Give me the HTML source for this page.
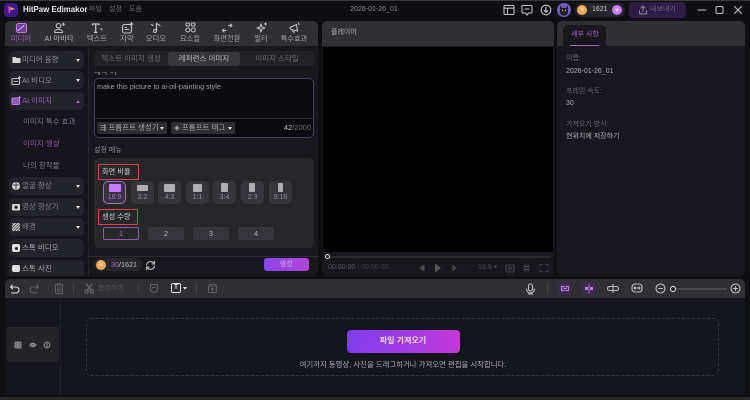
<!DOCTYPE html>
<html lang="ko"><head><meta charset="utf-8"><style>
html,body{margin:0;padding:0;background:#0e0e13}
#p{position:relative;width:750px;height:400px;overflow:hidden;background:#0e0e13;font-family:"Liberation Sans","Noto Sans CJK KR",sans-serif;color:#a0a0a5;font-size:7.5px;line-height:10px;filter:blur(.35px)}
#p div,#p span,#p svg{position:absolute}
.t{white-space:nowrap;transform:translateY(-50%)}
.c{white-space:nowrap;transform:translate(-50%,-50%)}
.r{border-radius:4px}
.sb{left:9px;width:75px;height:18px;background:#23232a;border-radius:5px}
.tri{width:0;height:0;border-left:2.5px solid transparent;border-right:2.5px solid transparent;border-top:3px solid #ddd}
.chip{top:181px;width:23px;height:23px;background:#35353b;border-radius:5px;box-sizing:border-box}
.chip i{position:absolute;background:#aeaeb3;border-radius:1px}
.chip b{position:absolute;left:0;right:0;top:12px;text-align:center;font-weight:400;font-size:7px;color:#8c8c92}
.q{top:227px;width:36px;height:13px;background:#35353b;border-radius:2px;text-align:center;line-height:13px;color:#aeaeb3}
svg{fill:none;stroke:#c0c0c4;stroke-width:1.1;stroke-linecap:round;stroke-linejoin:round}
</style></head><body><div id="p">
<div style="left:0;top:0;width:750px;height:1px;background:#3a3a3d"></div>

<!-- title bar -->
<div style="left:4px;top:3px;width:14px;height:14px;border-radius:4px;background:#3a1d8a"></div>
<svg style="left:7px;top:5px" width="9" height="10" viewBox="0 0 9 10"><path d="M1 1L8 4L4 5L2 9Z" fill="#e83fb0" stroke="none"/><path d="M3 2L8 4L4 5Z" fill="#f4b23c" stroke="none"/></svg>
<div class="t" style="left:23px;top:10px;color:#ececee;font-weight:700;font-size:7.9px">HitPaw Edimakor</div>
<div class="t" style="left:89px;top:10px;color:#6c6c72;font-size:7px">파일</div>
<div class="t" style="left:109px;top:10px;color:#6c6c72;font-size:7px">설정</div>
<div class="t" style="left:129px;top:10px;color:#6c6c72;font-size:7px">도움</div>
<div class="c" style="left:374px;top:10px;color:#8e8e94;font-size:7px">2026-01-26_01</div>

<svg style="left:503px;top:4px" width="12" height="12" viewBox="0 0 12 12"><rect x="1" y="1.5" width="10" height="9" rx="1"/><path d="M1 4.2H11M4.500 4.200V10.500"/></svg>
<svg style="left:521px;top:4px" width="12" height="13" viewBox="0 0 12 13"><path d="M2 1.500H10a1 1 0 0 1 1 1V8a1 1 0 0 1-1 1H7.500L6 11L4.500 9H2a1 1 0 0 1-1-1V2.500a1 1 0 0 1 1-1Z"/><path d="M4 5H8"/></svg>
<svg style="left:540px;top:4px" width="12" height="12" viewBox="0 0 12 12"><circle cx="6" cy="6" r="4.800"/><path d="M6 3V8M4.200 6.500L6 8.300L7.800 6.500"/></svg>
<div style="left:557px;top:3px;width:14px;height:14px;border-radius:50%;background:#6c5fc0"></div>
<svg style="left:559px;top:5px" width="10" height="11" viewBox="0 0 10 11"><path d="M1 0.500L3 3H7L9 .5L9 7C9 9.500 7 10.500 5 10.500S1 9.500 1 7Z" fill="#221c24" stroke="none"/><circle cx="3.500" cy="5.500" r=".7" fill="#d8a050" stroke="none"/><circle cx="6.500" cy="5.500" r=".7" fill="#d8a050" stroke="none"/></svg>
<div style="left:575px;top:3px;width:50px;height:14px;border-radius:7px;background:#25252b"></div>
<div style="left:577px;top:5px;width:10px;height:10px;border-radius:50%;background:#eeaa5c;color:#fbe0b8;font-size:5px;line-height:10px;text-align:center">AI</div>
<div class="t" style="left:592px;top:10px;color:#d0d0d4;font-size:7px">1621</div>
<div class="c" style="left:617px;top:10px;width:10px;height:10px;border-radius:50%;background:#c77bf0;transform:translate(-50%,-50%);color:#fff;text-align:center;line-height:10px;font-size:9px">+</div>
<div style="left:629px;top:2px;width:57px;height:16px;border-radius:4px;background:#2b1d45"></div>
<svg style="left:638px;top:5px" width="10" height="10" viewBox="0 0 10 10"><path d="M5 1V6.500M3 3L5 1L7 3M1.500 5.500V8.800H8.500V5.500" stroke="#8a7f96"/></svg>
<div class="t" style="left:650px;top:10px;color:#6f6580;font-size:7px">내보내기</div>
<svg style="left:697px;top:4px" width="48" height="12" viewBox="0 0 48 12" stroke-width="1.200"><path d="M1 6H9"/><rect x="19" y="2.500" width="7" height="7" rx="1.500"/><path d="M37.500 2.500L44.500 9.500M44.500 2.500L37.500 9.500"/></svg>

<!-- top tabs panel -->
<div style="left:5px;top:21px;width:313px;height:255px;background:#17171d;border-radius:5px"></div>
<div style="left:5px;top:21px;width:313px;height:25px;background:#303034;border-radius:5px 5px 0 0"></div>
<div style="left:5px;top:46px;width:83px;height:230px;background:#15151b"></div>
<div style="left:88px;top:46px;width:1px;height:230px;background:#26262b"></div>

<svg style="left:15px;top:22px" width="13" height="12" viewBox="0 0 13 12"><rect x="1.500" y="1.500" width="10" height="9" rx="2" stroke="#c77bf0" fill="#6d3f8e"/><path d="M3 8.500L9 3.500" stroke="#e2b3f7"/></svg>
<svg style="left:53px;top:22px" width="13" height="12" viewBox="0 0 13 12"><circle cx="5.500" cy="3.800" r="2.300"/><path d="M1.500 10.500C1.500 8 3 7.500 5.500 7.500S9.500 8 9.500 10.500Z"/><path d="M10.500 1V3.500M9.500 2.200H11.500"/></svg>
<svg style="left:91px;top:22px" width="13" height="12" viewBox="0 0 13 12"><path d="M1.500 3V2H8V3M4.700 2V10.500M3.500 10.500H6" stroke-width="1.300"/><path d="M9 6.500H12L10.500 8.500Z" fill="#c8c8cc" stroke="none"/></svg>
<svg style="left:121px;top:22px" width="13" height="12" viewBox="0 0 13 12"><rect x="1.500" y="2.500" width="9" height="8.500" rx="2"/><path d="M4 7.500H8M4 5.500H5.500M10.500 .500V3.500M9 2H12"/></svg>
<svg style="left:150px;top:22px" width="13" height="12" viewBox="0 0 13 12"><path d="M6.500 1.500V8.500" stroke-width="1.300"/><circle cx="5" cy="9" r="1.500"/><path d="M6.500 1.500C8 2.800 9.500 2.500 10 4M1.500 2.500L3 3.500"/></svg>
<svg style="left:184px;top:22px" width="13" height="12" viewBox="0 0 13 12"><rect x="2" y="1" width="3.500" height="3" rx=".8"/><rect x="7.500" y="1" width="3.500" height="3" rx=".8"/><circle cx="3.800" cy="8" r="2"/><circle cx="9.300" cy="8" r="2"/></svg>
<svg style="left:221px;top:22px" width="13" height="12" viewBox="0 0 13 12"><path d="M1.500 8.500H5M1.500 8.500L3 7M1.500 8.500L3 10M7.500 3.500H11M11 3.500L9.500 2M11 3.500L9.500 5"/></svg>
<svg style="left:255px;top:22px" width="13" height="12" viewBox="0 0 13 12"><path d="M6 2L7 5L10 6L7 7L6 10L5 7L2 6L5 5Z"/><path d="M10.500 1V3M9.500 2H11.500"/></svg>
<svg style="left:288px;top:22px" width="13" height="12" viewBox="0 0 13 12"><path d="M2 5.500L8.500 2.500L9.500 9L3 7.500Z"/><path d="M4.500 8L5 10H6.500M10.500 1L11 2.500"/></svg>

<div class="c" style="left:21px;top:39px;color:#9a5cc2;font-size:7.300px">미디어</div>
<div class="c" style="left:59px;top:39px;font-size:7.300px;color:#b0b0b5">AI 아바타</div>
<div class="c" style="left:97px;top:39px;font-size:7.300px">텍스트</div>
<div class="c" style="left:127px;top:39px;font-size:7.300px">자막</div>
<div class="c" style="left:156px;top:39px;font-size:7.300px">오디오</div>
<div class="c" style="left:190px;top:39px;font-size:7.300px">요소들</div>
<div class="c" style="left:227px;top:39px;font-size:7.300px">화면전환</div>
<div class="c" style="left:261px;top:39px;font-size:7.300px">필터</div>
<div class="c" style="left:294px;top:39px;font-size:7.300px">특수효과</div>

<!-- sidebar -->
<div class="sb" style="top:51px"></div><div class="sb" style="top:71px"></div><div class="sb" style="top:92px"></div>
<div class="sb" style="top:177px"></div><div class="sb" style="top:198px"></div><div class="sb" style="top:218px"></div><div class="sb" style="top:239px"></div><div class="sb" style="top:260px;height:16px;border-radius:5px 5px 0 0"></div>

<svg style="left:12px;top:55px" width="9" height="9" viewBox="0 0 9 9"><path d="M.500 2H3.500L4.500 3H8.500V8H.500Z" fill="#d8d8dc" stroke="none"/></svg>
<div class="t" style="left:22px;top:60px;color:#909096">미디어 음향</div><div class="tri" style="left:76px;top:59px"></div>
<svg style="left:11px;top:76px" width="10" height="10" viewBox="0 0 10 10"><rect x="1" y="2.500" width="7.500" height="6" rx="1"/><path d="M3 5.500H6.500M8.500 .500V2.500M7.500 1.500H9.500"/></svg>
<div class="t" style="left:22px;top:81px;color:#909096">AI 비디오</div><div class="tri" style="left:76px;top:79px"></div>
<svg style="left:11px;top:96px" width="10" height="10" viewBox="0 0 10 10"><rect x="1" y="2" width="7.500" height="6.500" rx="1" fill="#8d5bb0" stroke="#c07ae8"/><path d="M8.500 .500V2.500M7.500 1.500H9.500" stroke="#c07ae8"/></svg>
<div class="t" style="left:22px;top:101px;color:#9c60c4">AI 이미지</div><div class="tri" style="left:76px;top:100px;border-top:0;border-bottom:3px solid #a868d0"></div>
<div class="t" style="left:23px;top:122px;color:#7a7a80">이미지 특수 효과</div>
<div class="t" style="left:23px;top:144px;color:#8e5ab6">이미지 생성</div>
<div class="t" style="left:23px;top:166px;color:#7a7a80">나의 창작물</div>
<svg style="left:11px;top:181px" width="10" height="10" viewBox="0 0 10 10"><circle cx="5" cy="5" r="4" fill="#d5d5d8" stroke="none"/><path d="M5 1V9M2 4H8" stroke="#222" stroke-width=".8"/></svg>
<div class="t" style="left:22px;top:186px;color:#808086">얼굴 향상</div><div class="tri" style="left:76px;top:185px"></div>
<svg style="left:11px;top:202px" width="10" height="10" viewBox="0 0 10 10"><rect x="1" y="2" width="8" height="6.500" rx="1" fill="#d5d5d8" stroke="none"/><circle cx="5" cy="5.200" r="1.600" fill="#222" stroke="none"/></svg>
<div class="t" style="left:22px;top:207px;color:#808086">영상 향상기</div><div class="tri" style="left:76px;top:206px"></div>
<div style="left:12px;top:223px;width:8px;height:8px;background:repeating-linear-gradient(135deg,#c8c8cc 0 1px,#55555a 1px 2px)"></div>
<div class="t" style="left:22px;top:227px;color:#808086">배경</div><div class="tri" style="left:76px;top:226px"></div>
<div style="left:12px;top:244px;width:8px;height:8px;border-radius:2px;background:#e0e0e4"></div><div style="left:14.500px;top:246.500px;width:3px;height:3px;border-radius:50%;background:#222"></div>
<div class="t" style="left:22px;top:248px;color:#a8a8ac">스톡 비디오</div>
<div style="left:12px;top:265px;width:8px;height:7px;border-radius:2px;background:#e0e0e4"></div>
<div class="t" style="left:22px;top:269px;color:#a8a8ac">스톡 사진</div>

<!-- main tabs -->
<div style="left:94px;top:51px;width:220px;height:21px;background:#212126;border-radius:4px"></div>
<div style="left:168px;top:52px;width:72px;height:14px;background:#36363b;border-radius:3px"></div>
<div class="c" style="left:131px;top:59px;color:#6c6c71">텍스트 이미지 생성</div>
<div class="c" style="left:204px;top:59px;color:#b8b8bc">레퍼런스 이미지</div>
<div class="c" style="left:277px;top:59px;color:#6c6c71">이미지 스타일</div>
<div style="left:94px;top:66px;width:220px;height:6px;background:#17171d"></div>
<div style="left:94px;top:72px;width:40px;height:6px;overflow:hidden"><span style="left:0;top:-5px;white-space:nowrap;color:#a0a0a5">제작 어</span></div>

<div style="left:94px;top:78px;width:220px;height:60px;box-sizing:border-box;background:#0b0b0f;border:1px solid #4b3b5c;border-radius:5px"></div>
<div class="t" style="left:97px;top:87px;color:#9c9ca1;font-size:7.200px">make this picture to ai-oil-painting style</div>
<div style="left:95px;top:118px;width:218px;height:1px;background:#2a2a2f"></div>
<div style="left:97px;top:122px;width:70px;height:12px;background:#2c2c31;border-radius:2px"></div>
<div class="t" style="left:100px;top:128px;color:#a8a8ad">⇶ 프롬프트 생성기</div><div class="tri" style="left:160px;top:127px"></div>
<div style="left:171px;top:122px;width:64px;height:12px;background:#2c2c31;border-radius:2px"></div>
<div class="t" style="left:174px;top:128px;color:#a8a8ad">◈ 프롬프트 태그</div><div class="tri" style="left:228px;top:127px"></div>
<div class="t" style="right:439px;top:128px;color:#6c6c71"><span style="position:static;color:#c0c0c4">42</span>/2000</div>

<div class="t" style="left:94px;top:151px;color:#8e8e94;font-size:7px">설정 메뉴</div>
<div style="left:94px;top:158px;width:220px;height:90px;background:#26262b;border-radius:5px"></div>
<div style="left:98px;top:164px;width:41px;height:16px;box-sizing:border-box;border:1.500px solid #d8473f"></div>
<div class="t" style="left:102px;top:172px;color:#d0d0d4;font-size:7.200px">화면 비율</div>
<div class="chip" style="left:103px;border:1px solid #a06cc8"><i style="left:5px;top:2px;width:12px;height:8px;background:#c77bf8"></i><b style="top:11px;color:#a472c8">16:9</b></div>
<div class="chip" style="left:131px"><i style="left:6px;top:4px;width:11px;height:6px"></i><b>3:2</b></div>
<div class="chip" style="left:158px"><i style="left:6px;top:3px;width:11px;height:8px"></i><b>4:3</b></div>
<div class="chip" style="left:186px"><i style="left:7px;top:3px;width:9px;height:8px"></i><b>1:1</b></div>
<div class="chip" style="left:213px"><i style="left:8px;top:2px;width:7px;height:9px"></i><b>3:4</b></div>
<div class="chip" style="left:241px"><i style="left:8px;top:2px;width:6px;height:9px"></i><b>2:3</b></div>
<div class="chip" style="left:269px"><i style="left:8.500px;top:2px;width:5px;height:9px"></i><b>9:16</b></div>
<div style="left:98px;top:209px;width:40px;height:16px;box-sizing:border-box;border:1.500px solid #d8473f"></div>
<div class="t" style="left:102px;top:217px;color:#d0d0d4;font-size:7.200px">생성 수량</div>
<div class="q" style="left:103px;box-sizing:border-box;border:1px solid #8d5ab4;background:#26262b;line-height:11px;color:#9c6cc4">1</div>
<div class="q" style="left:148px">2</div><div class="q" style="left:193px">3</div><div class="q" style="left:238px">4</div>

<div style="left:89px;top:256px;width:229px;height:1px;background:#2a2a2f"></div>
<div style="left:94px;top:258px;width:48px;height:13px;background:#26262b;border-radius:7px"></div>
<div style="left:96px;top:260px;width:10px;height:10px;border-radius:50%;background:#eeaa5c;color:#fbe0b8;font-size:5px;line-height:10px;text-align:center">AI</div>
<div class="t" style="left:111px;top:265px;color:#c0c0c4;font-size:7.200px"><span style="position:static;color:#a868d0">30</span>/1621</div>
<svg style="left:145px;top:260px" width="11" height="11" viewBox="0 0 11 11"><path d="M1.500 5A4 4 0 0 1 8.500 3L9.500 4M9.500 6A4 4 0 0 1 2.500 8L1.500 7M9.500 1.500V4H7M1.500 9.500V7H4"/></svg>
<div style="left:264px;top:258px;width:45px;height:13px;border-radius:3px;background:linear-gradient(90deg,#8a45e8,#b345d8)"></div>
<div class="c" style="left:286px;top:265px;color:#d5b8ee;font-size:7px">생성</div>

<!-- player -->
<div style="left:322px;top:21px;width:232px;height:255px;background:#17171d;border-radius:5px"></div>
<div style="left:322px;top:21px;width:232px;height:25px;background:#303034;border-radius:5px 5px 0 0"></div>
<div class="t" style="left:331px;top:33px;color:#aeaeb3;font-size:7px">플레이어</div>
<div style="left:323px;top:47px;width:230px;height:205px;background:#000"></div>
<div style="left:325px;top:255.500px;width:226px;height:2px;background:#2b2b30"></div>
<div style="left:325px;top:254px;width:5px;height:5px;box-sizing:border-box;border:1px solid #ddd;border-radius:50%;background:#222"></div>
<div class="t" style="left:328px;top:268px;color:#54545a;font-size:7px">00:00:00 <span style="position:static;color:#3e3e44">/ 00:00:00</span></div>
<svg style="left:419px;top:262px" width="60" height="12" viewBox="0 0 60 12"><path d="M4 3.500L1 6L4 8.500ZM5 3.500V8.500" fill="#48484d" stroke="#48484d"/><path d="M16.500 2.500L21 6L16.500 9.500Z" fill="#55555a" stroke="#55555a"/><path d="M34 3.500L37 6L34 8.500Z" fill="#48484d" stroke="#48484d"/></svg>
<div class="t" style="left:478px;top:268px;color:#46464c;font-size:7px">16:9 ▾</div>
<svg style="left:505px;top:262px" width="46" height="12" viewBox="0 0 46 12"><g style="stroke:#424248"><rect x="1" y="3" width="8" height="7" rx="1"/><circle cx="5" cy="6.500" r="1.500"/><path d="M20 2V10M23 2V10M18.500 4.500H24.500M18.500 7.500H24.500"/><path d="M35 4V2.500H37M41 2.500H43V4M43 8V9.500H41M37 9.500H35V8"/></g></svg>

<!-- details -->
<div style="left:557px;top:21px;width:188px;height:255px;background:#17171d;border-radius:5px"></div>
<div style="left:557px;top:21px;width:188px;height:25px;background:#303034;border-radius:5px 5px 0 0"></div>
<div style="left:563px;top:25px;width:43px;height:21px;background:#17171d;border-radius:5px 5px 0 0"></div>
<div class="c" style="left:589px;top:35px;transform:translate(-50%,-50%);color:#a060c8;font-size:7px;margin-left:-4px">세부 사항</div>
<div style="left:570px;top:44.500px;width:29px;height:1.200px;background:#a868d0"></div>
<div class="t" style="left:566px;top:59px;color:#66666c;font-size:7px">이름:</div>
<div class="t" style="left:566px;top:72px;color:#aeaeb3;font-size:7px">2026-01-26_01</div>
<div class="t" style="left:566px;top:92px;color:#66666c;font-size:7px">프레임 속도:</div>
<div class="t" style="left:566px;top:104px;color:#aeaeb3;font-size:7px">30</div>
<div class="t" style="left:566px;top:125px;color:#66666c;font-size:7px">가져오기 방식:</div>
<div class="t" style="left:566px;top:137px;color:#aeaeb3;font-size:7px">현위치에 저장하기</div>

<!-- timeline toolbar -->
<div style="left:5px;top:279px;width:740px;height:19px;background:#303034;border-radius:5px 5px 0 0"></div>
<div style="left:5px;top:298px;width:740px;height:97px;background:#14151c"></div>
<svg style="left:9px;top:283px" width="50" height="12" viewBox="0 0 50 12"><path d="M3 2L1.500 4L3.500 5.500M1.500 4H7A3 3 0 0 1 7 10H2.500" stroke="#e0e0e4"/><path d="M28 2L29.500 4L27.500 5.500M29.500 4H24A3 3 0 0 0 24 10H28" stroke="#5d5d62"/></svg>
<svg style="left:53px;top:282px" width="12" height="13" viewBox="0 0 12 13"><g style="stroke:#5c5c61"><path d="M1.500 3H10.500M4.500 3V1.500H7.500V3M2.500 3V11.500H9.500V3M5 5.500V9.500M7 5.500V9.500"/></g></svg>
<div style="left:73px;top:284px;width:1px;height:9px;background:#48484c"></div>
<svg style="left:84px;top:283px" width="11" height="11" viewBox="0 0 11 11"><g style="stroke:#6c6c71"><circle cx="2.500" cy="8.500" r="1.700"/><circle cx="8" cy="8.500" r="1.700"/><path d="M3.500 7L8 1M7 7L2.500 1"/></g></svg>
<div class="t" style="left:98px;top:289px;color:#54545a;font-size:7px">분리하기</div>
<div style="left:138px;top:284px;width:1px;height:9px;background:#48484c"></div>
<svg style="left:149px;top:283px" width="10" height="11" viewBox="0 0 10 11"><g style="stroke:#5c5c61"><path d="M1.500 1.500H8.500V7.500L5 10L1.500 7.500ZM3.500 4.500H6.500"/></g></svg>
<div style="left:171px;top:283px;width:10px;height:10px;box-sizing:border-box;border:1.200px solid #e0e0e4;border-radius:2px;color:#e0e0e4;font-size:7px;line-height:8px;text-align:center;font-weight:700">T</div>
<div class="tri" style="left:183px;top:287px"></div>
<div style="left:196px;top:284px;width:1px;height:9px;background:#48484c"></div>
<svg style="left:207px;top:283px" width="11" height="11" viewBox="0 0 11 11"><g style="stroke:#5c5c61"><path d="M1.500 3H9.500V9.500H1.500ZM1.500 3L2.500 1.500H8.500L9.500 3M5.500 8V5M4 6.500L5.500 5L7 6.500"/></g></svg>

<svg style="left:525px;top:283px" width="11" height="12" viewBox="0 0 11 12"><rect x="3.500" y="1" width="4" height="7" rx="2"/><path d="M1.500 6A4 4 0 0 0 9.500 6M5.500 10V11M3.500 11H7.500"/></svg>
<div style="left:547px;top:284px;width:1px;height:9px;background:#48484c"></div>
<div style="left:559px;top:282px;width:12px;height:13px;border-radius:2px;background:#3e2b50"></div>
<div style="left:583px;top:282px;width:12px;height:13px;border-radius:2px;background:#3e2b50"></div>
<svg style="left:559px;top:283px" width="12" height="11" viewBox="0 0 12 11"><path d="M5 3.500H2.500V7.500H5M7 3.500H9.500V7.500H7M5 5.500H7" stroke="#c07ae8" stroke-width="1.300"/></svg>
<svg style="left:583px;top:283px" width="12" height="11" viewBox="0 0 12 11"><rect x="2" y="4" width="3" height="3" fill="#c07ae8" stroke="none"/><rect x="7" y="4" width="3" height="3" fill="#c07ae8" stroke="none"/><path d="M6 1V10" stroke="#c07ae8" stroke-width=".8"/></svg>
<svg style="left:607px;top:283px" width="12" height="11" viewBox="0 0 12 11"><path d="M5 3.500H2.500A2 2 0 0 0 2.500 7.500H5M7 3.500H9.500A2 2 0 0 1 9.500 7.500H7M6 1.500V9.500"/></svg>
<svg style="left:631px;top:282px" width="12" height="12" viewBox="0 0 12 12"><rect x="1" y="2" width="10" height="8" rx="3"/><path d="M3 6H9M4 4.800L3 6L4 7.200M8 4.800L9 6L8 7.200"/></svg>
<svg style="left:654px;top:282px" width="13" height="13" viewBox="0 0 13 13"><circle cx="6.500" cy="6.500" r="4.500"/><path d="M4.500 6.500H8.500"/></svg>
<div style="left:672px;top:288px;width:55px;height:1.500px;background:#48484c"></div>
<div style="left:670px;top:286px;width:6px;height:6px;box-sizing:border-box;border:1.300px solid #eee;border-radius:50%;background:#222"></div>
<svg style="left:729px;top:282px" width="13" height="13" viewBox="0 0 13 13"><circle cx="6.500" cy="6.500" r="4.500"/><path d="M4.500 6.500H8.500M6.500 4.500V8.500"/></svg>

<!-- timeline -->
<div style="left:60px;top:298px;width:1px;height:97px;background:#202127"></div>
<div style="left:7px;top:327px;width:52px;height:35px;background:#232328;border-radius:2px"></div>
<svg style="left:14px;top:341px" width="40" height="8" viewBox="0 0 40 8"><g style="stroke:#8c8c90"><rect x="1" y="1" width="6" height="6" rx="1" fill="#6c6c70"/><path d="M4 1V7" /><path d="M16 4C17.500 1.800 20.500 1.800 22 4C20.500 6.200 17.500 6.200 16 4Z" fill="#6c6c70"/><circle cx="33" cy="4" r="2.800"/><path d="M33 2.500V5.500"/></g></svg>
<div style="left:86px;top:318px;width:633px;height:58px;box-sizing:border-box;border:1px dashed #33343b;border-radius:5px"></div>
<div style="left:347px;top:330px;width:113px;height:23px;border-radius:4px;background:linear-gradient(100deg,#7c3cf0,#c53ad8)"></div>
<div class="c" style="left:403px;top:341px;color:#fff;font-size:8px;font-weight:500">파일 가져오기</div>
<div class="c" style="left:403px;top:365px;color:#aeaeb3;font-size:7.400px">여기까지 동영상, 사진을 드래그하거나 가져오면 편집을 시작합니다.</div>
<div style="left:0;top:397px;width:750px;height:3px;background:#2a2a2d"></div>
</div></body></html>
